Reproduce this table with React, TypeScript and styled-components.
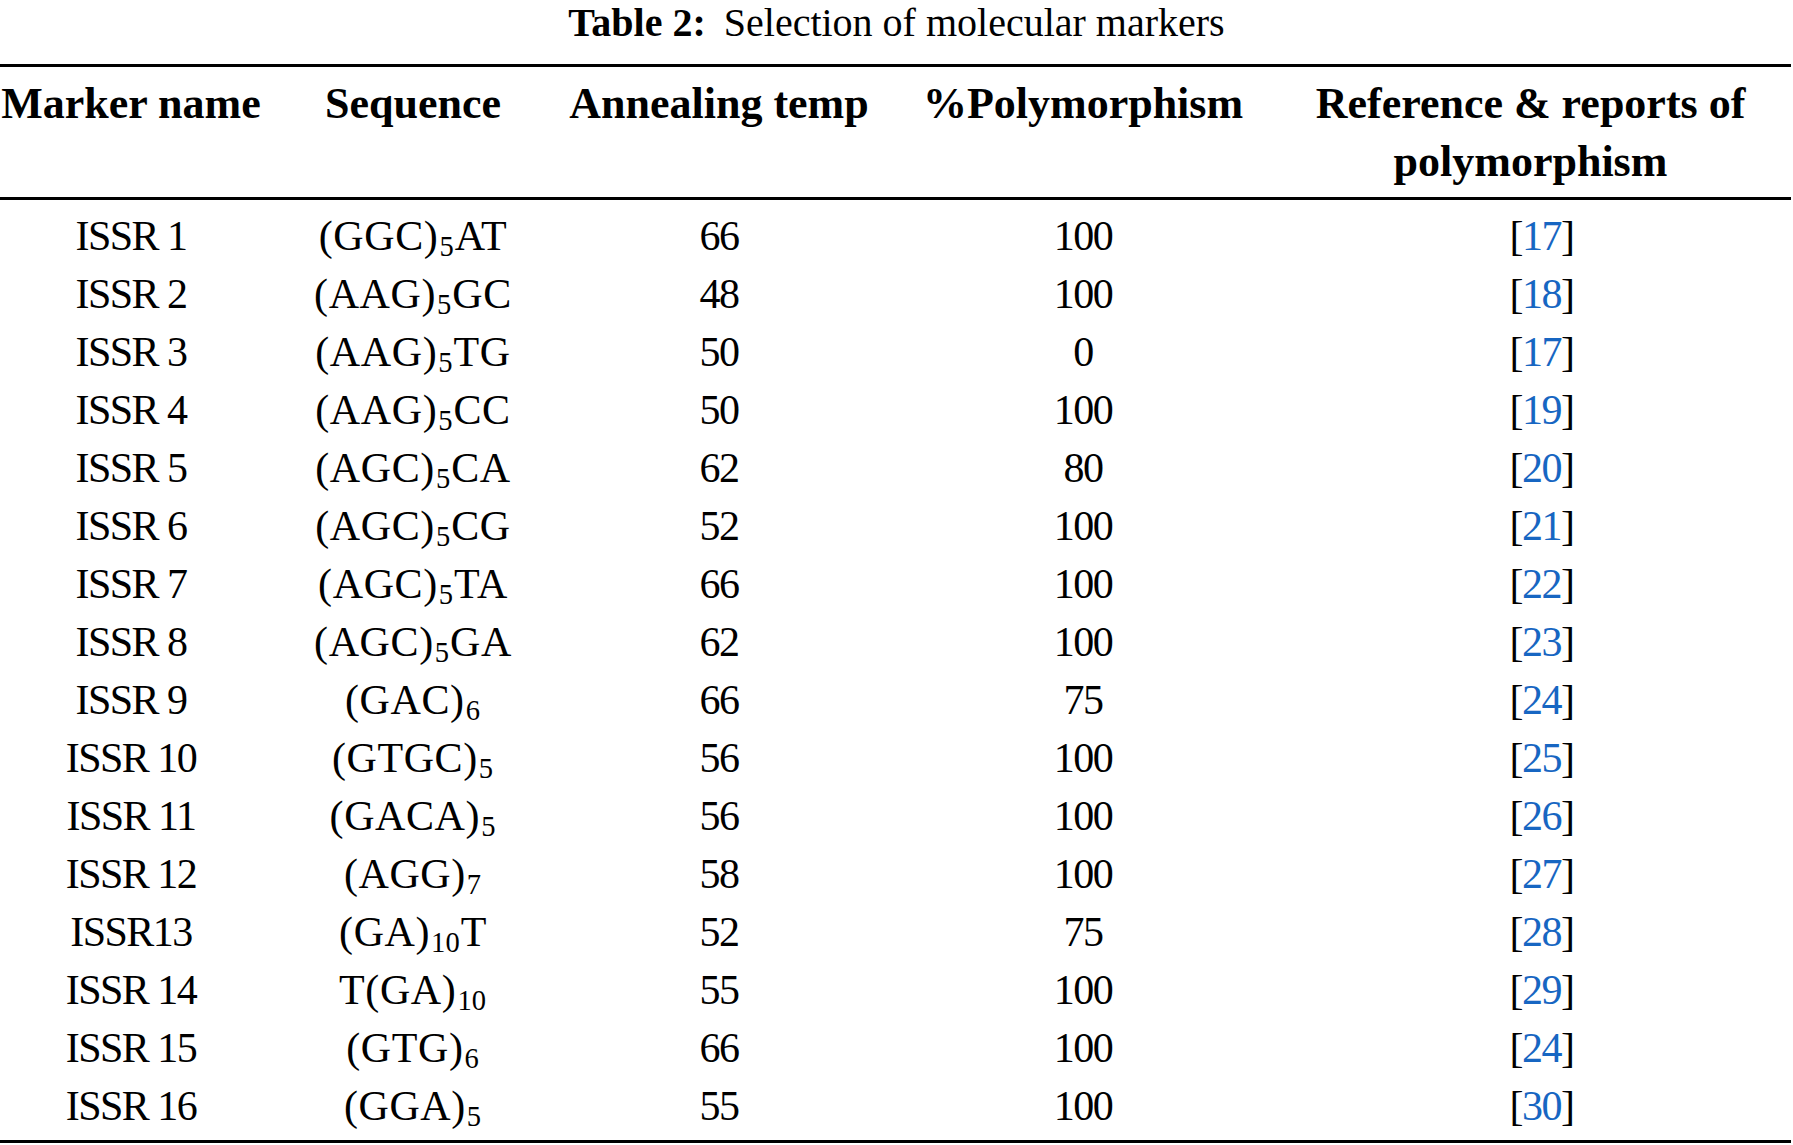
import React from 'react';
import styled, { createGlobalStyle } from 'styled-components';

const GlobalStyle = createGlobalStyle`
  html, body {
    margin: 0;
    padding: 0;
    background: #ffffff;
  }
  body {
    font-family: "Liberation Serif", "Times New Roman", serif;
    color: #000000;
  }
`;

const Page = styled.div`
  width: 1791px;
  display: flex;
  flex-direction: column;
`;

const Caption = styled.div`
  font-size: 40px;
  line-height: 45px;
  text-align: center;
  padding-left: 2px;
  margin-bottom: 19px;
  white-space: nowrap;
`;

const CaptionLabel = styled.span`
  font-weight: bold;
  margin-right: 18px;
`;

const Grid = styled.div`
  display: grid;
  grid-template-columns: 262px 302px 310px 418px 499px;
`;

const Head = styled(Grid)`
  border-top: 3px solid #000;
  border-bottom: 3px solid #000;
  padding: 8px 0 6px;
`;

const HeadCell = styled.div<{ $shift?: number }>`
  font-size: 44px;
  font-weight: bold;
  line-height: 58px;
  text-align: center;
  white-space: nowrap;
  padding-right: ${(p) => (p.$shift ? p.$shift * 2 : 0)}px;
`;

const Body = styled.div`
  display: flex;
  flex-direction: column;
  padding: 7px 0 5px;
  border-bottom: 3px solid #000;
`;

const Row = styled(Grid)`
  height: 58px;
`;

const Cell = styled.div<{ $loose?: boolean }>`
  font-size: 42px;
  line-height: 58px;
  text-align: center;
  white-space: nowrap;
  letter-spacing: ${(p) => (p.$loose ? '0.6px' : '-1.5px')};
`;

const Sub = styled.sub`
  font-size: 0.68em;
  line-height: 0;
  vertical-align: -0.22em;
  letter-spacing: 0;
  margin: 0 1px;
`;

const Cite = styled.span`
  color: #1766c2;
`;

type Marker = {
  name: string;
  pre?: string;
  motif: string;
  n: string;
  post?: string;
  temp: string;
  poly: string;
  ref: string;
};

const markers: Marker[] = [
  { name: 'ISSR 1', motif: '(GGC)', n: '5', post: 'AT', temp: '66', poly: '100', ref: '17' },
  { name: 'ISSR 2', motif: '(AAG)', n: '5', post: 'GC', temp: '48', poly: '100', ref: '18' },
  { name: 'ISSR 3', motif: '(AAG)', n: '5', post: 'TG', temp: '50', poly: '0', ref: '17' },
  { name: 'ISSR 4', motif: '(AAG)', n: '5', post: 'CC', temp: '50', poly: '100', ref: '19' },
  { name: 'ISSR 5', motif: '(AGC)', n: '5', post: 'CA', temp: '62', poly: '80', ref: '20' },
  { name: 'ISSR 6', motif: '(AGC)', n: '5', post: 'CG', temp: '52', poly: '100', ref: '21' },
  { name: 'ISSR 7', motif: '(AGC)', n: '5', post: 'TA', temp: '66', poly: '100', ref: '22' },
  { name: 'ISSR 8', motif: '(AGC)', n: '5', post: 'GA', temp: '62', poly: '100', ref: '23' },
  { name: 'ISSR 9', motif: '(GAC)', n: '6', temp: '66', poly: '75', ref: '24' },
  { name: 'ISSR 10', motif: '(GTGC)', n: '5', temp: '56', poly: '100', ref: '25' },
  { name: 'ISSR 11', motif: '(GACA)', n: '5', temp: '56', poly: '100', ref: '26' },
  { name: 'ISSR 12', motif: '(AGG)', n: '7', temp: '58', poly: '100', ref: '27' },
  { name: 'ISSR13', motif: '(GA)', n: '10', post: 'T', temp: '52', poly: '75', ref: '28' },
  { name: 'ISSR 14', pre: 'T', motif: '(GA)', n: '10', temp: '55', poly: '100', ref: '29' },
  { name: 'ISSR 15', motif: '(GTG)', n: '6', temp: '66', poly: '100', ref: '24' },
  { name: 'ISSR 16', motif: '(GGA)', n: '5', temp: '55', poly: '100', ref: '30' },
];

const App = () => {
  return (
    <Page>
      <GlobalStyle />
      <Caption>
        <CaptionLabel>Table 2:</CaptionLabel>Selection of molecular markers
      </Caption>
      <Head>
        <HeadCell>Marker name</HeadCell>
        <HeadCell>Sequence</HeadCell>
        <HeadCell>Annealing temp</HeadCell>
        <HeadCell>%Polymorphism</HeadCell>
        <HeadCell $shift={11}>
          Reference &amp; reports of
          <br />
          polymorphism
        </HeadCell>
      </Head>
      <Body>
        {markers.map((m) => (
          <Row key={m.name}>
            <Cell>{m.name}</Cell>
            <Cell $loose>
              {m.pre}
              {m.motif}
              <Sub>{m.n}</Sub>
              {m.post}
            </Cell>
            <Cell>{m.temp}</Cell>
            <Cell>{m.poly}</Cell>
            <Cell>
              [<Cite>{m.ref}</Cite>]
            </Cell>
          </Row>
        ))}
      </Body>
    </Page>
  );
};

export default App;
